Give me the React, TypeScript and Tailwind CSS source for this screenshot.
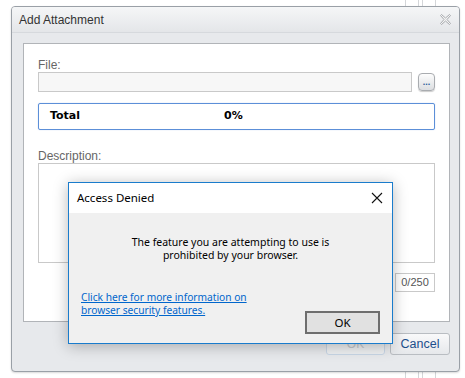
import React from "react";

const arial = { fontFamily: '"Liberation Sans", Arial, sans-serif' };

function ExtClose() {
  return (
    <svg width="13" height="13" viewBox="0 0 13 13">
      <path
        d="M1.5 2.5 L2.5 1.5 L6.5 5 L10.5 1.5 L11.5 2.5 L8 6.5 L11.5 10.5 L10.5 11.5 L6.5 8 L2.5 11.5 L1.5 10.5 L5 6.5 Z"
        fill="#f4f4f4"
        stroke="#a6a9ad"
        strokeWidth="1"
        strokeLinejoin="round"
      />
    </svg>
  );
}

function WinClose() {
  return (
    <svg width="12" height="12" viewBox="0 0 12 12">
      <path d="M1 1 L11 11 M11 1 L1 11" stroke="#111" strokeWidth="1.1" />
    </svg>
  );
}

function AccessDenied() {
  return (
    <div
      className="absolute left-[68px] top-[182px] w-[325px] h-[162px] border border-[#1a7ccc] bg-[#f0f0f0] shadow-[0_2px_14px_rgba(0,0,0,0.28)] flex flex-col"
      style={{ fontFamily: '"Noto Sans", "Open Sans", sans-serif' }}
    >
      <div className="h-[30px] bg-white flex items-center justify-between pl-[8px] pr-[9px] shrink-0">
        <span className="text-[11.5px] text-black">Access Denied</span>
        <WinClose />
      </div>
      <div className="flex flex-col px-[12px] pt-[23px]">
        <p className="text-center text-[10.5px] leading-[13px] text-black">
          The feature you are attempting to use is
          <br />
          prohibited by your browser.
        </p>
        <div className="flex justify-between items-start mt-[29px]">
          <a className="text-[10.2px] leading-[13px] text-[#0066cc] underline cursor-pointer">
            Click here for more information on
            <br />
            browser security features.
          </a>
          <button className="mt-[20px] w-[75px] h-[23px] border-2 border-[#6e6e6e] bg-[#e1e1e1] text-[11.5px] text-black flex items-center justify-center">
            OK
          </button>
        </div>
      </div>
    </div>
  );
}

export default function App() {
  return (
    <div className="relative w-[465px] h-[378px] overflow-hidden bg-white" style={arial}>
      {/* stuff behind the window */}
      <div className="absolute left-[405px] top-0 w-[31px] h-[378px] border-l border-r border-[#d4d6d9]">
        <div className="absolute left-[12px] top-0 h-full w-[5px] border-l border-r border-[#d4d6d9]" />
      </div>

      <div className="relative pt-[6px] pl-[11px]">
        <div className="w-[449px] h-[366px] rounded-[4px] border border-[#9aa0a7] bg-[#e7e9ec] flex flex-col overflow-hidden shadow-[0_1px_2px_rgba(0,0,0,0.15)]">
          <div className="h-[26px] shrink-0 bg-gradient-to-b from-[#f5f6f7] to-[#e4e6e9] border-b border-[#d6d9dd] flex items-center justify-between pl-[7px] pr-[7px]">
            <span className="text-[12px] text-[#333]">Add Attachment</span>
            <ExtClose />
          </div>

          <div className="flex flex-col pl-[11px] pr-[9px] pt-[10px]">
            <div className="h-[279px] bg-white border border-[#b1b4b8] flex flex-col pl-[14px] pr-[14px] pt-[14px]">
              <label className="text-[12px] leading-[14px] text-[#666]">File:</label>
              <div className="flex items-center gap-[6px]">
                <div className="flex-1 h-[20px] border border-[#c9c9c9] bg-[#f7f7f7]" />
                <button className="w-[17px] h-[18px] rounded-[4px] border border-[#a9acb0] bg-gradient-to-b from-[#fdfdfd] to-[#dcdee1] flex items-end justify-center pb-[3px] shadow-[0_1px_1px_rgba(0,0,0,0.2)]">
                  <span className="text-[9px] leading-[9px] font-bold text-[#2a5a9a]">...</span>
                </button>
              </div>
              <div
                className="mt-[11px] h-[27px] rounded-[2px] border border-[#5c8fd8] flex items-center pl-[11px] text-[11px] font-bold text-black shadow-[0_0_1px_rgba(92,143,216,0.6)]"
                style={{ fontFamily: '"DejaVu Sans", Verdana, sans-serif' }}
              >
                <span className="w-[174px]">Total</span>
                <span>0%</span>
              </div>
              <label className="mt-[19px] text-[12px] leading-[14px] text-[#666]">Description:</label>
              <div className="h-[100px] border border-[#c9c9c9] bg-white" />
              <div className="flex justify-end mt-[10px]">
                <div className="w-[40px] h-[19px] border border-[#c9c9c9] flex items-center justify-center text-[11px] text-[#555]">
                  0/250
                </div>
              </div>
            </div>

            <div className="flex justify-end gap-[5px] mt-[11px]">
              <button className="w-[59px] h-[22px] rounded-[3px] border border-[#c8d6e6] bg-[#eef0f2] text-[12px] text-[#c4c8cd]">
                OK
              </button>
              <button className="w-[60px] h-[22px] rounded-[3px] border border-[#b9bdc2] bg-gradient-to-b from-[#f9f9fa] to-[#e6e8eb] text-[12.5px] text-[#1d4f8c]">
                Cancel
              </button>
            </div>
          </div>
        </div>
      </div>

      <AccessDenied />
    </div>
  );
}
